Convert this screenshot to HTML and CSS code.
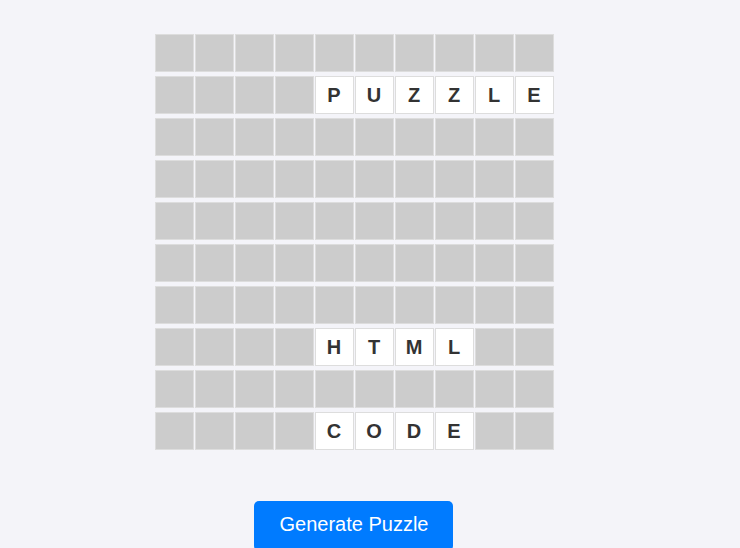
FILE: index.html
```html
<!DOCTYPE html>
<html>
<head>
<meta charset="utf-8">
<link rel="stylesheet" href="styles.css">
</head>
<body>
<main class="page">
  <div class="grid" id="grid"></div>
  <button class="btn">Generate Puzzle</button>
</main>
<script>
  var rows = [
    "          ",
    "    PUZZLE",
    "          ",
    "          ",
    "          ",
    "          ",
    "          ",
    "    HTML  ",
    "          ",
    "    CODE  "
  ];
  var g = document.getElementById('grid');
  rows.forEach(function (r) {
    for (var i = 0; i < 10; i++) {
      var c = document.createElement('div');
      var ch = r[i];
      c.className = ch === ' ' ? 'cell' : 'cell filled';
      c.textContent = ch === ' ' ? '' : ch;
      g.appendChild(c);
    }
  });
</script>
</body>
</html>
```
FILE: styles.css
```css
html, body {
  margin: 0;
  padding: 0;
  background: #f4f4f9;
  font-family: "Liberation Sans", Arial, sans-serif;
}
.page {
  width: 708px;
  display: flex;
  flex-direction: column;
  align-items: center;
  padding-top: 34px;
}
.grid {
  display: grid;
  grid-template-columns: repeat(10, 39px);
  grid-auto-rows: 38px;
  column-gap: 1px;
  row-gap: 4px;
}
.cell {
  box-sizing: border-box;
  border: 1px solid #dddddd;
  background: #cccccc;
  display: flex;
  align-items: center;
  justify-content: center;
  font-weight: bold;
  font-size: 20px;
  color: #333333;
}
.cell.filled {
  background: #ffffff;
}
.btn {
  margin-top: 51px;
  margin-right: 1px;
  background: #007bff;
  color: #ffffff;
  border: none;
  border-radius: 5px;
  padding: 12px 25px 15px 26px;
  font-family: "Liberation Sans", Arial, sans-serif;
  font-size: 20px;
  line-height: 23px;
}
```
